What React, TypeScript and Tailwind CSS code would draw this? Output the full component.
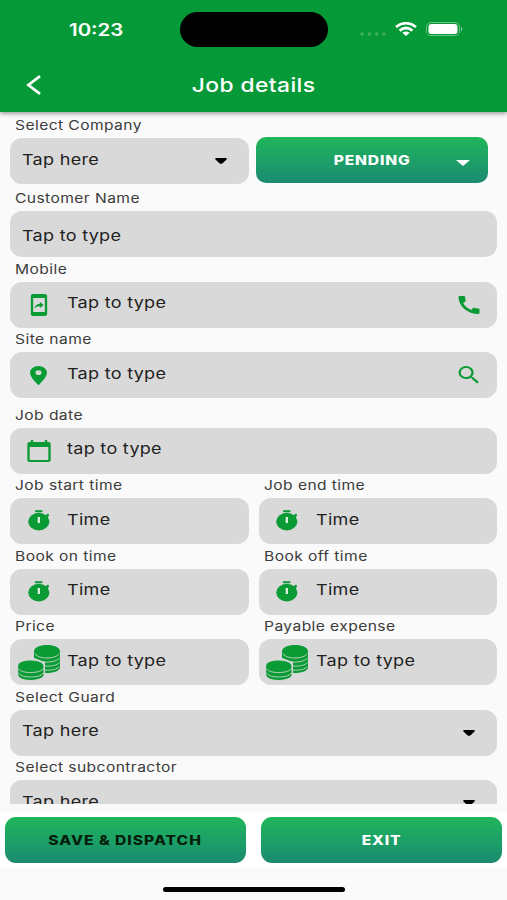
import type { ReactNode } from 'react';
import { MdCalendarToday, MdCall, MdLocationOn, MdMobileScreenShare, MdSearch } from 'react-icons/md';

const iconProps = { preserveAspectRatio: 'none', className: 'w-[28px] h-[24px] text-[#0a9b35]' };

function StopwatchIcon() {
  return (
    <svg viewBox="0 0 22 22" preserveAspectRatio="none" className="w-[22px] h-[22px] -mt-[2px]">
      <g fill="#0a9b35">
        <rect x="7" y="1.2" width="7.4" height="2" />
        <ellipse cx="10.8" cy="12.6" rx="10.6" ry="8.8" />
        <path d="M16.4 7L20 4.5L21.2 5.9L19.6 8.8Z" />
      </g>
      <rect x="9.7" y="8" width="2.2" height="6" fill="#e6f3e9" />
    </svg>
  );
}

function CoinsIcon() {
  return (
    <svg viewBox="0 0 44 37" className="w-[44px] h-[37px]">
      <path d="M17 7.5C17 3.5 22.5 1 30 1S43 3.5 43 7.5V23.5C43 26.5 37 29 30 29H28V18L17 14Z" fill="#0a9b35" />
      <g fill="none" stroke="#c5d6c9" strokeWidth="0.9">
        <path d="M18 9.5C20 13 25 14 30 14S41 12.5 42.3 9.5" />
        <path d="M24 17.5C32 19 40 17.5 42.5 14" />
        <path d="M28 22C34 22.5 40 21.5 42.5 18.5" />
        <path d="M28 26C34 26.5 40 25.5 42.5 22.5" />
      </g>
      <path
        d="M0.7 22C0.7 18.5 6 16 13.5 16S27 18.5 27 22V30.5C27 34 21 36.5 13.5 36.5S0.7 34 0.7 30.5Z"
        fill="#0a9b35"
        stroke="#d9d9d9"
        strokeWidth="1"
      />
      <g fill="none" stroke="#c5d6c9" strokeWidth="0.9">
        <path d="M1.5 24.5C4 28 9 28.5 13.5 28.5S24 28 26.3 24.5" />
        <path d="M1.5 29C4 32.5 9 33 13.5 33S24 32.5 26.3 29" />
      </g>
    </svg>
  );
}

function Caret() {
  return (
    <svg viewBox="0 0 12 6" className="w-[12px] h-[6px]">
      <path d="M1 0H11C12 0 12 1.2 11.3 1.8L7.6 5.2Q6 6.3 4.4 5.2L0.7 1.8C0 1.2 0 0 1 0Z" fill="#000" />
    </svg>
  );
}

interface FieldProps {
  label: string;
  value: string;
  icon?: ReactNode;
  trailing?: ReactNode;
  className?: string;
  low?: boolean;
}

function Field({ label, value, icon, trailing, className = '', low }: FieldProps) {
  return (
    <div className={`min-w-0 ${className}`}>
      <div className="h-[24.5px] pl-[5px] flex items-center">
        <span className="inline-block origin-left scale-x-[1.2] text-[13px] leading-none tracking-[0.35px] text-[#3c3c3c] whitespace-nowrap">
          {label}
        </span>
      </div>
      <div className="h-[46px] rounded-[12px] bg-[#d9d9d9] flex items-center">
        {icon && <div className="w-[57px] h-full flex items-center justify-center">{icon}</div>}
        <span
          className={`inline-block origin-left scale-x-[1.2] text-[15px] leading-none tracking-[0.25px] text-[#1f1f1f] whitespace-nowrap ${icon ? '' : 'ml-3'} ${low ? 'pt-[2px]' : 'pb-1'}`}
        >
          {value}
        </span>
        {trailing && <div className="ml-auto w-[57px] flex items-center justify-center">{trailing}</div>}
      </div>
    </div>
  );
}

function StatusBar() {
  return (
    <div className="h-[59px] flex items-center">
      <div className="w-[180px] pl-[69px] text-white">
        <span className="inline-block origin-left scale-x-[1.2] text-[17px] leading-none font-semibold">10:23</span>
      </div>
      <div className="w-[148px] h-[35px] rounded-full bg-black" />
      <div className="flex items-center pl-[32px]">
        <svg viewBox="0 0 26 4" className="w-[26px] h-[4px] mt-[8px]" fill="#43b061">
          <circle cx="2" cy="2" r="1.8" />
          <circle cx="9.3" cy="2" r="1.8" />
          <circle cx="16.6" cy="2" r="1.8" />
          <circle cx="23.9" cy="2" r="1.8" />
        </svg>
        <svg viewBox="0 0 22 14" className="w-[22px] h-[14px] ml-[9px] -mt-[2px]" fill="none" stroke="#fff" strokeWidth="2.7">
          <path d="M1 5Q11 -2.6 21 5" />
          <path d="M4.6 8.6Q11 3.4 17.4 8.6" />
          <path d="M7.3 10.8Q11 8 14.7 10.8L11 14Z" fill="#fff" stroke="none" />
        </svg>
        <svg viewBox="0 0 38 14" className="w-[38px] h-[14px] ml-[9px] -mt-[2px]">
          <rect x="0.5" y="0.5" width="33" height="13" rx="4.5" fill="none" stroke="#6cc284" />
          <rect x="2.5" y="2" width="29" height="10" rx="3" fill="#fff" />
          <path d="M35 4.5Q37.5 7 35 9.5Z" fill="#8ace9c" />
        </svg>
      </div>
    </div>
  );
}

function Header() {
  return (
    <header className="h-[112px] shrink-0 bg-[#069937] shadow-[0_2px_4px_rgba(0,0,0,0.35)] relative z-10">
      <StatusBar />
      <div className="h-[53px] pb-px grid grid-cols-[54px_1fr_54px] items-center">
        <svg viewBox="0 0 16 20" className="w-[16px] h-[20px] ml-[26px]" fill="none" stroke="#fff" strokeWidth="2.7">
          <path d="M14 1.2L2.4 10L14 18.8" />
        </svg>
        <h1 className="text-center text-white text-[19px] leading-none font-medium tracking-[0.35px]">
          <span className="inline-block scale-x-[1.2]">Job details</span>
        </h1>
      </div>
    </header>
  );
}

export default function App() {
  return (
    <div className="w-[507px] h-[900px] overflow-hidden bg-[#fafafa] flex flex-col font-['Inter','Liberation_Sans',sans-serif]">
      <Header />
      <main className="h-[692px] shrink-0 overflow-hidden pl-[10.4px] pr-[9.6px] pt-[1.5px]">
        <div className="flex gap-[7px]">
          <Field label="Select Company" value="Tap here" trailing={<Caret />} className="w-[239px]" />
          <button className="mt-[23.5px] w-[232px] h-[46px] rounded-[10px] bg-linear-to-b from-[#20b658] to-[#1b8b70] grid grid-cols-[1fr_50px] items-center text-white">
            <span className="inline-block scale-x-[1.2] pl-[42px] text-[13px] leading-none font-extrabold tracking-[0.7px]">PENDING</span>
            <svg viewBox="0 0 14 6" className="w-[14px] h-[6px] ml-[18px] mt-[6px]">
              <path d="M0 0H14L7 6Z" fill="#fff" />
            </svg>
          </button>
        </div>
        <Field label="Customer Name" value="Tap to type" className="mt-[2.5px]" low />
        <Field label="Mobile" value="Tap to type" icon={<MdMobileScreenShare {...iconProps} />} trailing={<MdCall {...iconProps} />} />
        <Field
          label="Site name"
          value="Tap to type"
          icon={<MdLocationOn preserveAspectRatio="none" className="w-[29px] h-[23px] text-[#0a9b35]" />}
          trailing={<MdSearch {...iconProps} />}
        />
        <Field label="Job date" value="tap to type" icon={<MdCalendarToday {...iconProps} />} className="mt-[5px]" />
        <div className="grid grid-cols-2 gap-[10px]">
          <Field label="Job start time" value="Time" icon={<StopwatchIcon />} />
          <Field label="Job end time" value="Time" icon={<StopwatchIcon />} />
        </div>
        <div className="grid grid-cols-2 gap-[10px]">
          <Field label="Book on time" value="Time" icon={<StopwatchIcon />} />
          <Field label="Book off time" value="Time" icon={<StopwatchIcon />} />
        </div>
        <div className="grid grid-cols-2 gap-[10px]">
          <Field label="Price" value="Tap to type" icon={<CoinsIcon />} />
          <Field label="Payable expense" value="Tap to type" icon={<CoinsIcon />} />
        </div>
        <Field label="Select Guard" value="Tap here" trailing={<Caret />} />
        <Field label="Select subcontractor" value="Tap here" trailing={<Caret />} />
      </main>
      <footer className="mt-[8px] h-[56px] shrink-0 bg-white px-[5px] grid grid-cols-2 gap-[15px] items-center">
        <button className="h-[46px] rounded-[11px] bg-linear-to-b from-[#20b658] to-[#1b8b70] text-[13px] leading-none font-extrabold tracking-[0.85px] text-[#04200b]">
          <span className="inline-block scale-x-[1.2]">SAVE &amp; DISPATCH</span>
        </button>
        <button className="h-[46px] rounded-[11px] bg-linear-to-b from-[#20b658] to-[#1b8b70] text-[13px] leading-none font-extrabold tracking-[0.7px] text-white">
          <span className="inline-block scale-x-[1.2]">EXIT</span>
        </button>
      </footer>
      <div className="mt-[19px] mx-auto w-[182px] h-[5px] rounded-full bg-black" />
    </div>
  );
}
